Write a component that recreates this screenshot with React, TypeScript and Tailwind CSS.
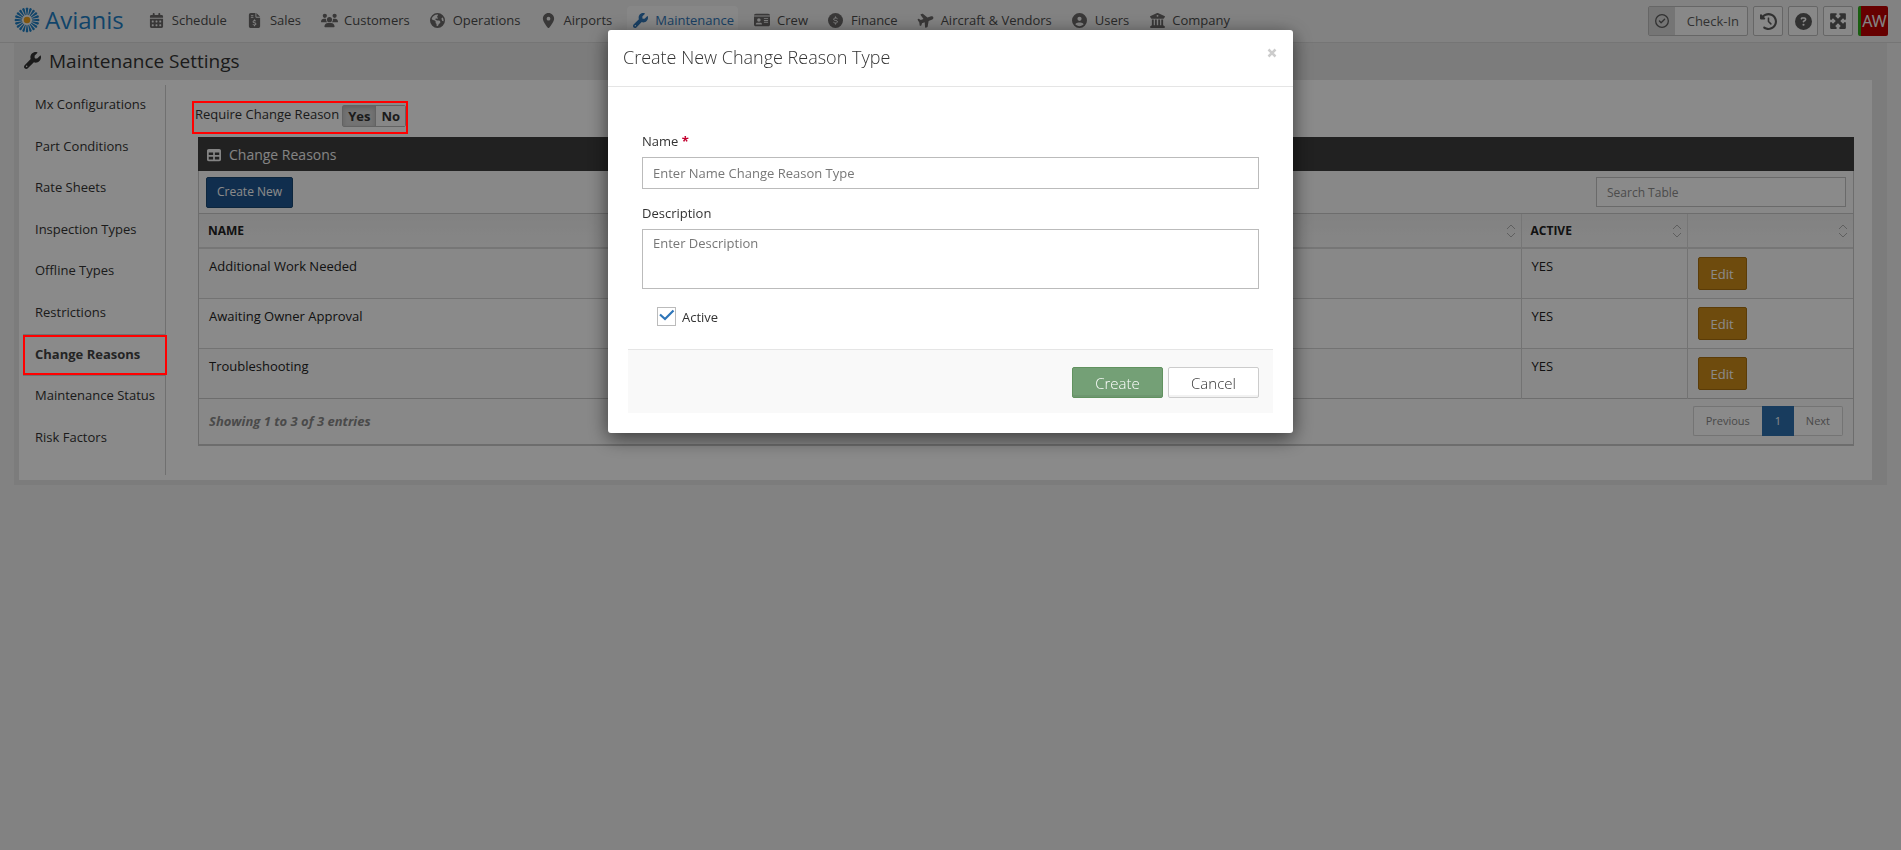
import { useState } from 'react';
import type { ReactNode } from 'react';
import type { IconType } from 'react-icons';
import {
  FaBuildingColumns,
  FaCalendarDays,
  FaCircleQuestion,
  FaCircleUser,
  FaClockRotateLeft,
  FaEarthAmericas,
  FaFileInvoiceDollar,
  FaIdCard,
  FaLocationDot,
  FaMaximize,
  FaPlane,
  FaRegCircleCheck,
  FaTable,
  FaUsers,
  FaWrench,
} from 'react-icons/fa6';

type IconLike = IconType | ((props: { size?: number; className?: string }) => ReactNode);

const DollarCircle = ({ size = 15 }: { size?: number }) => (
  <svg width={size} height={size} viewBox="0 0 30 30" fill="none" aria-hidden="true">
    <circle cx="15" cy="15" r="15" fill="currentColor" />
    <path
      d="M19 11.500C18 10.300 16.800 10 15 10c-2.200 0-3.800 1-3.800 2.500C11.200 16 19 14 19 17.500c0 1.600-1.700 2.500-4 2.500-1.900 0-3.200-.4-4.200-1.700M15 7v2.500M15 20.500V23"
      stroke="#f1f1f1"
      strokeWidth="2"
    />
  </svg>
);

const NAV: { label: string; icon: IconLike; size: number; tilt?: boolean }[] = [
  { label: 'Schedule', icon: FaCalendarDays, size: 15 },
  { label: 'Sales', icon: FaFileInvoiceDollar, size: 15 },
  { label: 'Customers', icon: FaUsers, size: 17 },
  { label: 'Operations', icon: FaEarthAmericas, size: 15 },
  { label: 'Airports', icon: FaLocationDot, size: 15 },
  { label: 'Maintenance', icon: FaWrench, size: 15 },
  { label: 'Crew', icon: FaIdCard, size: 16 },
  { label: 'Finance', icon: DollarCircle, size: 15 },
  { label: 'Aircraft & Vendors', icon: FaPlane, size: 16, tilt: true },
  { label: 'Users', icon: FaCircleUser, size: 15 },
  { label: 'Company', icon: FaBuildingColumns, size: 15 },
];

const SIDEBAR = [
  'Mx Configurations',
  'Part Conditions',
  'Rate Sheets',
  'Inspection Types',
  'Offline Types',
  'Restrictions',
  'Change Reasons',
  'Maintenance Status',
  'Risk Factors',
];

const REASONS = ['Additional Work Needed', 'Awaiting Owner Approval', 'Troubleshooting'];

const RAYS = Array.from({ length: 20 }, (_, i) => i * 18);

function Logo() {
  return (
    <a href="#home" className="flex items-center gap-[5px] pb-[2px] text-[#1f7fc4]">
      <svg width="26" height="26" viewBox="-26 -26 52 52" aria-hidden="true">
        {RAYS.map((deg) => (
          <path
            key={deg}
            d="M-.8 -10 L-2.500 -23 Q0 -27 2.500 -23 L.8 -10Z"
            fill="#1f7fc4"
            transform={`rotate(${deg})`}
          />
        ))}
        <circle r="6.500" fill="#eba01e" />
      </svg>
      <span className="text-2xl leading-6">Avianis</span>
    </a>
  );
}

function TopNav() {
  return (
    <header className="flex h-[43px] items-center border-b border-[#d9d9d9] bg-[#f1f1f1] pr-[13px] pl-[14px]">
      <Logo />
      <nav className="ml-5 flex items-center gap-[11px]">
        {NAV.map(({ label, icon: Icon, size, tilt }) => {
          const active = label === 'Maintenance';
          return (
            <a
              key={label}
              href={`#${label.toLowerCase()}`}
              className={`flex h-[30px] items-center gap-[6px] rounded px-1 pb-[2px] whitespace-nowrap ${
                active ? 'bg-[#f9f9f9] text-[#2f76b8]' : 'text-[#4c4c4c]'
              }`}
            >
              <span
                className={`flex w-[18px] justify-center ${active ? '' : 'text-[#6a6868]'} ${tilt ? '-rotate-20' : ''}`}
              >
                <Icon size={size} />
              </span>
              {label}
            </a>
          );
        })}
      </nav>
      <div className="ml-auto flex items-center gap-[5px] text-[#5c5c5c]">
        <button className="flex h-[30px] items-stretch rounded-xs border border-[#bcbcbc] bg-[#fcfcfc]">
          <span className="flex w-[26px] items-center justify-center bg-[#d8d8d8]">
            <FaRegCircleCheck size={14} />
          </span>
          <span className="flex items-center pr-2 pl-3">Check-In</span>
        </button>
        <IconButton label="History">
          <FaClockRotateLeft size={17} />
        </IconButton>
        <IconButton label="Help">
          <FaCircleQuestion size={17} />
        </IconButton>
        <IconButton label="Full screen">
          <FaMaximize size={18} />
        </IconButton>
        <button className="h-[30px] w-[30px] rounded-xs border-l-3 border-[#2fae1f] bg-[#bd0000] text-center font-['Noto_Sans'] text-base leading-7 text-[#f4f4f4]">
          AW
        </button>
      </div>
    </header>
  );
}

function IconButton({ label, children }: { label: string; children: ReactNode }) {
  return (
    <button
      aria-label={label}
      className="flex h-[30px] w-[30px] items-center justify-center rounded-xs border border-[#bcbcbc] bg-[#fcfcfc]"
    >
      {children}
    </button>
  );
}

function SortIcon() {
  return (
    <svg width="10" height="14" viewBox="0 0 10 14" fill="none" stroke="#b0b0b0" aria-hidden="true">
      <path d="M1 5 5 1l4 4M1 9l4 4 4-4" />
    </svg>
  );
}

function Heading({ children, className }: { children?: string; className: string }) {
  return (
    <th className={`h-[34px] border-r border-b-2 border-[#dadada] pr-[5px] pl-[9px] last:border-r-0 ${className}`}>
      <div className="flex items-center justify-between">
        <span>{children}</span>
        <SortIcon />
      </div>
    </th>
  );
}

function ReasonsPanel() {
  return (
    <section className="ml-[6px] border-x border-b-2 border-[#c9c9c9] bg-[#fbfbfb]">
      <h2 className="-mx-px flex h-[34px] items-center gap-2 bg-[#3d3d3d] px-[9px] pt-px text-sm text-[#f4f4f4]">
        <FaTable size={14} />
        Change Reasons
      </h2>
      <div className="flex h-[43px] items-center justify-between border-b border-[#c9c9c9] px-[7px]">
        <button className="h-[31px] rounded-xs border border-[#184772] bg-[#1f5690] px-[10px] text-xs text-white">
          Create New
        </button>
        <input
          aria-label="Search Table"
          placeholder="Search Table"
          className="h-[30px] w-[250px] border border-[#c4c4c4] bg-white px-[10px] text-xs placeholder:text-[#8c8c8c]"
        />
      </div>
      <table className="w-full table-fixed border-collapse text-left">
        <thead className="bg-linear-to-b from-[#f0f0f0] to-[#f8f8f8] text-xs text-[#222]">
          <tr>
            <Heading className="w-[35%]">NAME</Heading>
            <Heading className="w-auto">DESCRIPTION</Heading>
            <Heading className="w-[166px]">ACTIVE</Heading>
            <Heading className="w-[166px]" />
          </tr>
        </thead>
        <tbody className="text-[#222]">
          {REASONS.map((name) => (
            <tr key={name} className="border-b border-[#d4d4d4] align-top last:border-[#c9c9c9] even:bg-white">
              <td className="border-r border-[#d4d4d4] px-[10px] py-2">{name}</td>
              <td className="border-r border-[#d4d4d4] px-[10px] py-2" />
              <td className="border-r border-[#d4d4d4] px-[10px] py-2">YES</td>
              <td className="px-[10px] py-2">
                <button className="block h-[33px] rounded-xs border border-[#a8700f] bg-[#cc8b18] px-3 text-[13px] text-white">
                  Edit
                </button>
              </td>
            </tr>
          ))}
        </tbody>
      </table>
      <div className="flex h-[45px] items-center justify-between px-[10px] pb-[2px]">
        <p className="font-bold text-[#8a8a8a] italic">Showing 1 to 3 of 3 entries</p>
        <div className="flex h-[30px] text-[11px] text-[#888]">
          <button className="rounded-l-xs border border-r-0 border-[#d6d6d6] bg-white px-3">Previous</button>
          <button className="w-8 bg-[#2d6fae] text-white">1</button>
          <button className="rounded-r-xs border border-l-0 border-[#d6d6d6] bg-white px-3">Next</button>
        </div>
      </div>
    </section>
  );
}

function CreateDialog() {
  const [active, setActive] = useState(true);

  return (
    <div className="fixed inset-0 z-40 bg-black/46">
      <div
        role="dialog"
        aria-labelledby="dialog-title"
        className="mx-auto mt-[30px] w-[685px] rounded-[3px] bg-white pb-5 text-[#333] shadow-[0_5px_20px_rgba(0,0,0,0.6)]"
      >
        <div className="flex h-[57px] items-start justify-between border-b border-[#e5e5e5] px-[15px] pt-[15px]">
          <h2 id="dialog-title" className="text-lg leading-6 font-light">
            Create New Change Reason Type
          </h2>
          <button aria-label="Close" className="pr-px text-[#ccc]">
            <svg width="10" height="16" viewBox="0 0 10 16" stroke="currentColor" strokeWidth="2.500" aria-hidden="true">
              <path d="M1.500 4.500l7 7M8.500 4.500l-7 7" />
            </svg>
          </button>
        </div>
        <form className="px-5 pt-11" onSubmit={(e) => e.preventDefault()}>
          <div className="px-[14px]">
            <label htmlFor="reason-name" className="block leading-5">
              Name <span className="font-bold text-[#c3002f]">*</span>
            </label>
            <input
              id="reason-name"
              placeholder="Enter Name Change Reason Type"
              className="mt-[6px] block h-8 w-full border border-[#bbb] px-[10px] placeholder:text-[#777]"
            />
            <label htmlFor="reason-description" className="mt-[14px] block leading-5">
              Description
            </label>
            <textarea
              id="reason-description"
              placeholder="Enter Description"
              className="mt-[6px] block h-[60px] w-full resize-none border border-[#bbb] px-[10px] py-1 leading-[18px] placeholder:text-[#777]"
            />
            <div className="mt-[18px] ml-[15px] flex h-[19px] items-center gap-[6px]">
              <span className="relative h-[19px] w-[19px]">
                <input
                  id="reason-active"
                  type="checkbox"
                  checked={active}
                  onChange={(e) => setActive(e.target.checked)}
                  className="block h-[19px] w-[19px] appearance-none border border-[#bbb] bg-white"
                />
                {active && (
                  <svg
                    className="pointer-events-none absolute inset-0 text-[#2e75b8]"
                    width="19"
                    height="19"
                    viewBox="0 0 19 19"
                    fill="none"
                    stroke="currentColor"
                    strokeWidth="2.200"
                    aria-hidden="true"
                  >
                    <path d="M3 7.500l5 4.500 8.500-8.500" />
                  </svg>
                )}
              </span>
              <label htmlFor="reason-active">Active</label>
            </div>
          </div>
          <div className="mt-[23px] flex h-16 items-center justify-end gap-[5px] border-t border-[#e5e5e5] bg-[#f9f9f9] px-[14px] pt-[2px] text-[15px] font-light">
            <button className="h-[31px] w-[91px] rounded-xs border border-[#61925f] bg-[#74a076] text-white shadow-[inset_0_-2px_0_rgba(0,0,0,0.05)]">
              Create
            </button>
            <button
              type="button"
              className="h-[31px] w-[91px] rounded-xs border border-[#ccc] bg-white text-[#333] shadow-[inset_0_-2px_0_rgba(0,0,0,0.05)]"
            >
              Cancel
            </button>
          </div>
        </form>
      </div>
    </div>
  );
}

export default function App() {
  const [required, setRequired] = useState(true);

  return (
    <div className="min-h-screen bg-[#f1f1f1] font-['Open_Sans',sans-serif] text-[13px] leading-[18px] text-[#333]">
      <TopNav />
      <main className="mx-[14px] bg-[#e6e6e6] pr-[15px] pb-[5px] pl-[5px]">
        <h1 className="flex h-[37px] items-center gap-2 pb-[2px] pl-[5px] text-[19px]">
          <FaWrench size={17} />
          Maintenance Settings
        </h1>
        <div className="flex bg-white py-[5px] pr-[18px]">
          <nav className="flex w-[147px] shrink-0 flex-col border-r border-[#d0d0d0] pb-4 pl-1">
            <div className="grid h-[374px] auto-rows-fr">
              {SIDEBAR.map((item) =>
                item === 'Change Reasons' ? (
                  <a
                    key={item}
                    href="#change-reasons"
                    className="relative flex items-center border-y border-[#d0d0d0] pb-[3px] pl-3 font-bold text-[#444]"
                  >
                    {item}
                    {/* callout, stays above the backdrop */}
                    <span className="absolute inset-y-0 left-0 -right-[2px] z-50 border-2 border-[#f00]" />
                  </a>
                ) : (
                  <a key={item} href="#settings" className="flex items-center pb-[3px] pl-3 whitespace-nowrap">
                    {item}
                  </a>
                ),
              )}
            </div>
          </nav>
          <div className="min-w-0 flex-1 pt-4 pl-[26px]">
            <div className="relative mb-[3px] flex h-[33px] w-[216px] items-start gap-[3px] pt-1 pl-[3px]">
              <span className="whitespace-nowrap">Require Change Reason</span>
              <div className="flex h-[22px] rounded-xs border border-[#b8b8b8] font-bold">
                <button
                  className="border-r border-[#b8b8b8] bg-[#d4d4d4] px-[5px] shadow-[inset_0_2px_4px_rgba(0,0,0,0.15)]"
                  aria-pressed={required}
                  onClick={() => setRequired(true)}
                >
                  Yes
                </button>
                <button className="bg-[#fafafa] px-[5px]" aria-pressed={!required} onClick={() => setRequired(false)}>
                  No
                </button>
              </div>
              <span className="pointer-events-none absolute inset-0 z-50 border-2 border-[#f00]" />
            </div>
            <ReasonsPanel />
          </div>
        </div>
      </main>
      <CreateDialog />
    </div>
  );
}
